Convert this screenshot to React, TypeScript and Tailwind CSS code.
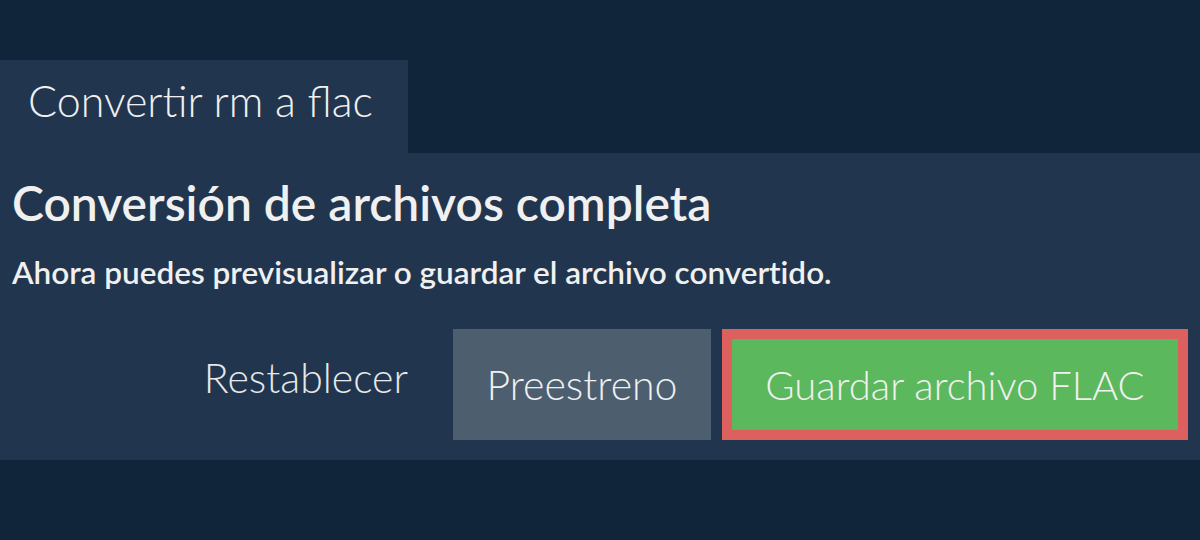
export default function App() {
  return (
    <div
      className="h-[540px] w-[1200px] overflow-hidden bg-[#10243a] pt-[60px] text-[#f0f0f0]"
      style={{ fontFamily: "Lato, 'Noto Sans', sans-serif" }}
    >
      <div className="h-[93px] w-[408px] bg-[#21364e] pl-[28px] pt-[19px]">
        <span className="block text-[43px] font-light leading-none">Convertir rm a flac</span>
      </div>
      <div className="h-[307px] bg-[#21364e] px-3 pt-[22px]">
        <h1 className="text-[48px] font-semibold leading-[56px]">Conversión de archivos completa</h1>
        <p className="mt-[23px] text-[31.5px] font-semibold leading-[36px] [font-variant-ligatures:no-common-ligatures]">
          Ahora puedes previsualizar o guardar el archivo convertido.
        </p>
        <div className="mt-[39px] flex items-center justify-end">
          <button className="mb-[14px] mr-[45px] text-[41px] font-light text-[#e8e8e8]">Restablecer</button>
          <button className="h-[111px] w-[258px] bg-[#4d5e6f] text-[41px] font-light">Preestreno</button>
          <div className="ml-[11px] border-[10px] border-[#dc605e]">
            <button className="h-[91px] w-[446px] bg-[#5cb85c] text-[40px] font-light">
              Guardar archivo FLAC
            </button>
          </div>
        </div>
      </div>
    </div>
  );
}
